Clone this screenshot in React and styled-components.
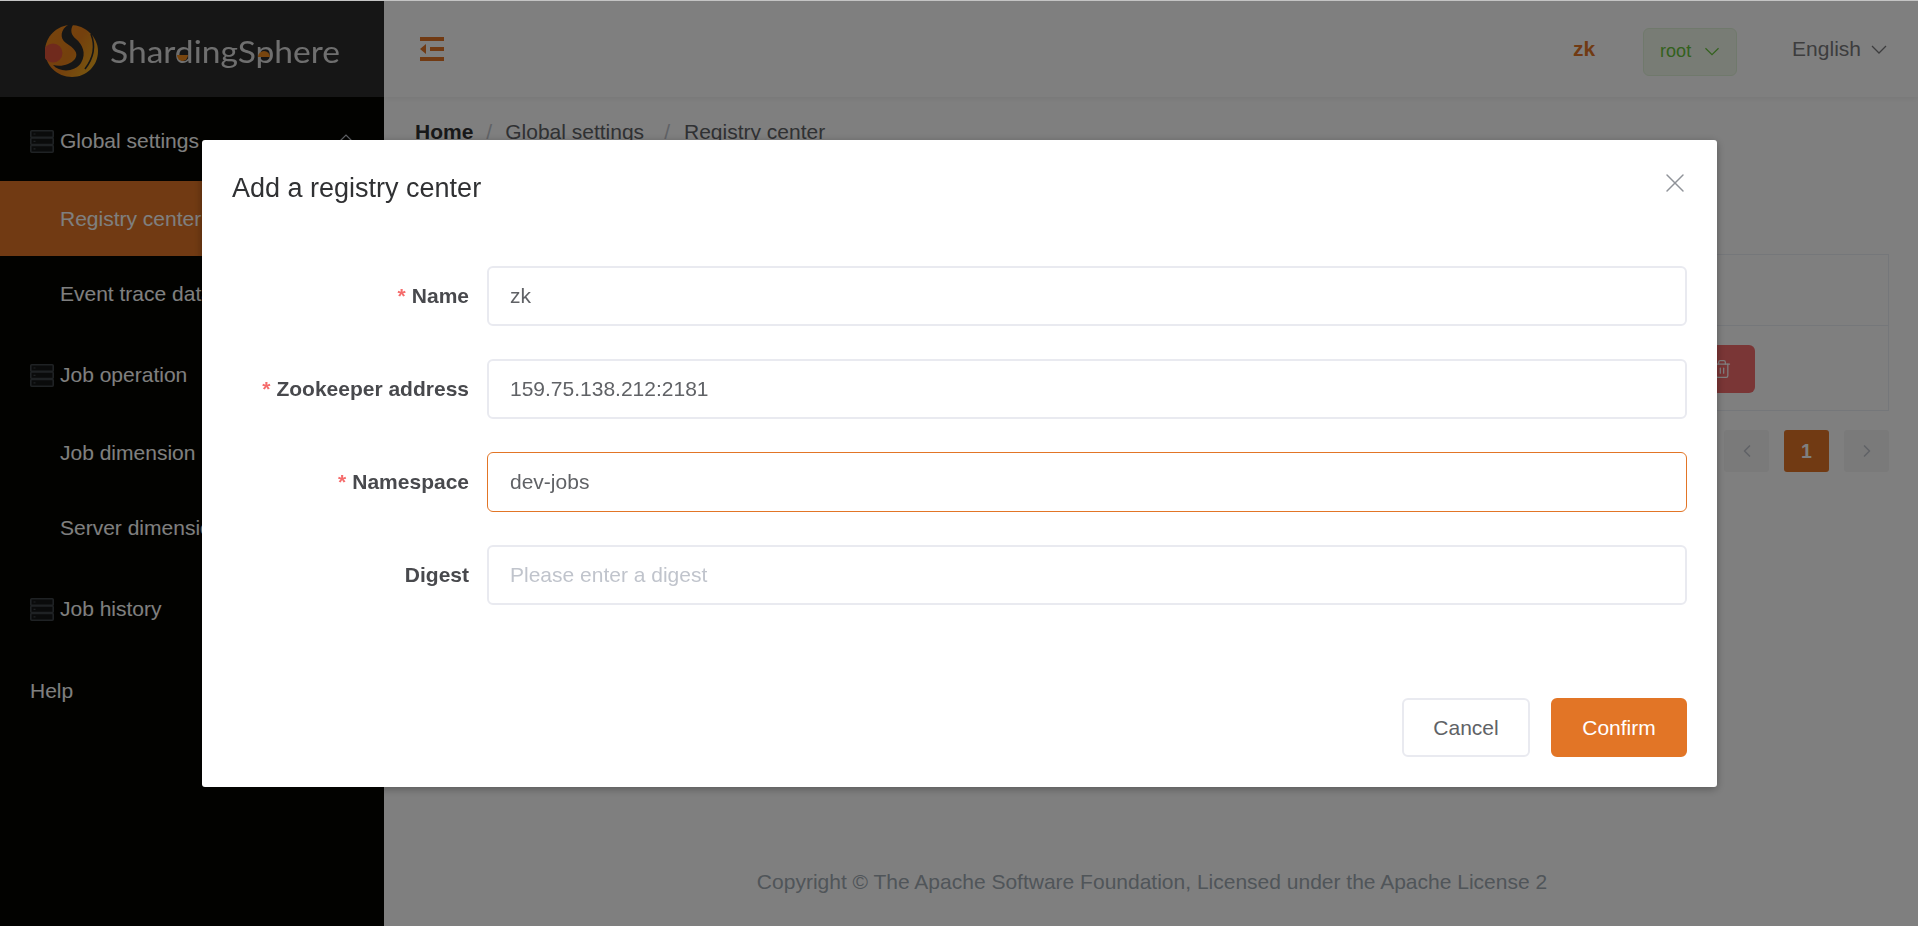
import styled, { createGlobalStyle } from 'styled-components';
import { ChevronLeft, ChevronRight, Trash2, X } from 'lucide-react';

const GlobalStyle = createGlobalStyle`
  html, body {
    margin: 0;
    padding: 0;
    height: 100%;
    overflow: hidden;
    background: #fff;
    font-family: "Liberation Sans", Arial, sans-serif;
    font-size: 21px;
    color: #606266;
  }
  * {
    box-sizing: border-box;
  }
`;

const Page = styled.div`
  display: flex;
  width: 1918px;
  height: 926px;
  overflow: hidden;
`;

const Sidebar = styled.aside`
  flex: 0 0 384px;
  background: #050500;
  color: #fff;
`;

const LogoBar = styled.div`
  display: flex;
  align-items: flex-start;
  height: 97px;
  padding: 22px 0 0 45px;
  background: #2d2d2d;
`;

const LogoMark = styled.svg`
  display: block;
  filter: blur(0.4px);
`;

const MenuTitle = styled.div`
  display: flex;
  align-items: center;
  gap: 6px;
  height: 84px;
  padding: ${(p) => (p.$withIcon ? '4px' : '0')} 30px 0;
  white-space: nowrap;
`;

const MenuItem = styled.div`
  display: flex;
  align-items: center;
  height: 75px;
  padding-left: 60px;
  white-space: nowrap;
  background: ${(p) => (p.$active ? '#e27526' : 'transparent')};
`;

const Caret = styled.svg`
  margin-left: auto;
  margin-right: -1px;
  margin-top: -4px;
  color: #c0c4cc;
`;

const Main = styled.main`
  flex: 1;
  display: flex;
  flex-direction: column;
  min-width: 0;
`;

const Header = styled.header`
  display: flex;
  align-items: center;
  height: 97px;
  padding: 1px 31px 0 36px;
  box-shadow: 0 1px 6px rgba(0, 0, 0, 0.08);
`;

const Toggle = styled.svg`
  display: block;
  margin-right: auto;
  color: #e27526;
`;

const SourceName = styled.b`
  color: #e27526;
  margin-right: 48px;
`;

const RoleTag = styled.div`
  display: flex;
  align-items: center;
  gap: 14px;
  width: 94px;
  height: 48px;
  margin-top: 6px;
  margin-right: 55px;
  padding: 0 0 2px 16px;
  border: 1px solid #e1f3d8;
  border-radius: 6px;
  background: #f0f9eb;
  color: #67c23a;
  font-size: 18px;
`;

const LanguagePicker = styled.div`
  display: flex;
  align-items: center;
  gap: 10px;
  color: #7a7a7d;
`;

const Content = styled.div`
  flex: 1;
  display: flex;
  flex-direction: column;
  padding: 23px 29px 32px 31px;
`;

const Breadcrumb = styled.nav`
  display: flex;
  align-items: center;
  height: 24px;
  white-space: nowrap;
`;

const Crumb = styled.span`
  color: ${(p) => (p.$strong ? '#303133' : '#606266')};
  font-weight: ${(p) => (p.$strong ? 700 : 400)};
`;

const Slash = styled.span`
  margin: 0 ${(p) => p.$right}px 0 ${(p) => p.$left}px;
  color: #c0c4cc;
`;

const Table = styled.div`
  margin-top: 110px;
  border: 1px solid #ebeef5;
`;

const TableRow = styled.div`
  display: grid;
  grid-template-columns: 1fr 2fr 1fr 1fr 200px;
  align-items: center;
  height: ${(p) => p.$height}px;
  padding-left: 20px;
  border-top: ${(p) => (p.$divided ? '1px solid #ebeef5' : 'none')};
`;

const DeleteButton = styled.div`
  display: flex;
  align-items: center;
  justify-content: center;
  width: 66px;
  height: 48px;
  margin: 2px 0 0 1px;
  border-radius: 6px;
  background: #f56c6c;
  color: #fff;
`;

const Pagination = styled.div`
  display: flex;
  justify-content: flex-end;
  gap: 15px;
  margin-top: 19px;
`;

const PageButton = styled.div`
  display: flex;
  align-items: center;
  justify-content: center;
  width: 45px;
  height: 42px;
  border-radius: 3px;
  background: ${(p) => (p.$active ? '#e27526' : '#f4f4f5')};
  color: ${(p) => (p.$active ? '#fff' : '#c0c4cc')};
  font-size: 19.5px;
  font-weight: 700;
`;

const Footer = styled.footer`
  margin-top: auto;
  text-align: center;
  line-height: 24px;
  color: #a0aab2;
  white-space: nowrap;
`;

const Overlay = styled.div`
  position: fixed;
  inset: 0;
  z-index: 10;
  background: rgba(0, 0, 0, 0.5);
  border-top: 1px solid #c4c4c4;
`;

const Dialog = styled.section`
  position: fixed;
  top: 140px;
  left: 202px;
  z-index: 11;
  display: flex;
  flex-direction: column;
  width: 1515px;
  height: 647px;
  padding: 30px;
  border-radius: 3px;
  background: #fff;
  box-shadow: 0 2px 8px rgba(0, 0, 0, 0.3);
`;

const DialogTitle = styled.h2`
  margin: 0 0 60px;
  font-size: 27px;
  font-weight: 400;
  line-height: 36px;
  color: #303133;
`;

const CloseIcon = styled(X)`
  position: absolute;
  top: 27px;
  right: 26px;
  color: #909399;
`;

const Form = styled.form`
  display: flex;
  flex-direction: column;
  gap: 33px;
`;

const Field = styled.div`
  display: grid;
  grid-template-columns: 237px 1fr;
  column-gap: 18px;
  align-items: center;
`;

const Label = styled.label`
  text-align: right;
  font-weight: 700;
  color: #48494d;
`;

const Required = styled.span`
  margin-right: 6px;
  color: #f56c6c;
`;

const TextInput = styled.input`
  width: 100%;
  height: 60px;
  padding: 0 ${(p) => (p.$focused ? 22 : 21)}px;
  border: ${(p) => (p.$focused ? '1px solid #e27526' : '2px solid #e9eaf0')};
  border-radius: 6px;
  outline: none;
  background: #fff;
  font: inherit;
  color: #606266;

  &::placeholder {
    color: #c0c4cc;
    opacity: 1;
  }
`;

const DialogFooter = styled.div`
  display: flex;
  justify-content: flex-end;
  gap: 21px;
  margin-top: auto;
`;

const Button = styled.button`
  height: 59px;
  width: ${(p) => (p.$primary ? '136px' : '128px')};
  padding: 0;
  border: 2px solid ${(p) => (p.$primary ? '#e27526' : '#e9eaf0')};
  border-radius: 6px;
  background: ${(p) => (p.$primary ? '#e27526' : '#fff')};
  color: ${(p) => (p.$primary ? '#fff' : '#606266')};
  font: inherit;
`;

function Logo() {
  return (
    <LogoMark width="300" height="60" viewBox="0 0 300 60" aria-label="ShardingSphere logo">
      <defs>
        <linearGradient id="flame" x1="0" y1="0" x2="1" y2="0.6">
          <stop offset="0" stopColor="#f08a1c" />
          <stop offset="0.6" stopColor="#e8801a" />
          <stop offset="1" stopColor="#f0a81e" />
        </linearGradient>
      </defs>
      <path d="M26 3C40 3 53 15 53 29C53 44 41 55 27 55C12 55 0 43 0 29C0 15 12 3 26 3Z" fill="url(#flame)" />
      <circle cx="8" cy="31" r="9.5" fill="#e0553a" />
      <path
        d="M23 3C16 7 14 16 21 21C29 26 34 31 30 37C25 43 16 45 8 43C15 51 30 50 36 41C42 31 37 22 31 17C26 13 25 8 28 3Z"
        fill="#2d2d2d"
      />
      <path d="M46 12C50 22 50 34 40 47" fill="none" stroke="#2d2d2d" strokeWidth="1.6" />
      <text
        x="65"
        y="41"
        fontFamily="Lato, 'Open Sans', sans-serif"
        fontWeight="400"
        fontSize="30"
        fill="#dedede"
        textLength="230"
        lengthAdjust="spacingAndGlyphs"
      >
        ShardingSphere
      </text>
      <path d="M132 33H143A5.5 6 0 0 1 132 33Z" fill="#f08a1c" />
      <path d="M213 35H225A6 6 0 0 0 213 35Z" fill="#f08a1c" />
    </LogoMark>
  );
}

function ServerIcon() {
  return (
    <svg width="24" height="23" viewBox="0 0 24 23" fill="#141617" stroke="#3f4549" strokeWidth="1.6">
      <rect x="0.8" y="0.8" width="22.4" height="6.6" rx="1" />
      <rect x="0.8" y="8" width="22.4" height="6.6" rx="1" />
      <rect x="0.8" y="15.4" width="22.4" height="6.8" rx="1" />
      <path d="M3.5 4H5.5M3.5 11.3H5.5M3.5 18.8H5.5" strokeWidth="1.2" />
    </svg>
  );
}

function ToggleIcon() {
  return (
    <Toggle width="24" height="24" viewBox="0 0 24 24" fill="currentColor">
      <rect x="0" y="0" width="24" height="4" />
      <rect x="10" y="10" width="14" height="4" />
      <rect x="0" y="20" width="24" height="4" />
      <path d="M0 12L6 7V17Z" />
    </Toggle>
  );
}

// wide shallow arrow used by the dropdowns
function Arrow({ width = 15 }) {
  return (
    <svg width={width} height="9" viewBox="0 0 15 9" fill="none" stroke="currentColor" strokeWidth="1.3">
      <path d="M0.5 1L7.5 8L14.5 1" />
    </svg>
  );
}

const MENU = [
  { title: 'Global settings', icon: true, caret: true, items: [{ label: 'Registry center', active: true }, { label: 'Event trace data source' }] },
  { title: 'Job operation', icon: true, items: [{ label: 'Job dimension' }, { label: 'Server dimension' }] },
  { title: 'Job history', icon: true, items: [] },
  { title: 'Help', items: [] },
];

const FIELDS = [
  { label: 'Name', value: 'zk', required: true },
  { label: 'Zookeeper address', value: '159.75.138.212:2181', required: true },
  { label: 'Namespace', value: 'dev-jobs', required: true, focused: true },
  { label: 'Digest', placeholder: 'Please enter a digest' },
];

export default function App() {
  return (
    <>
      <GlobalStyle />
      <Page>
        <Sidebar>
          <LogoBar>
            <Logo />
          </LogoBar>
          {MENU.map((group) => (
            <div key={group.title}>
              <MenuTitle $withIcon={group.icon}>
                {group.icon && <ServerIcon />}
                {group.title}
                {group.caret && (
                  <Caret width="18" height="10" viewBox="0 0 18 10" fill="none" stroke="currentColor" strokeWidth="1.2">
                    <path d="M1 9L9 1L17 9" />
                  </Caret>
                )}
              </MenuTitle>
              {group.items.map((item) => (
                <MenuItem key={item.label} $active={item.active}>
                  {item.label}
                </MenuItem>
              ))}
            </div>
          ))}
        </Sidebar>

        <Main>
          <Header>
            <ToggleIcon />
            <SourceName>zk</SourceName>
            <RoleTag>
              root
              <Arrow width={14} />
            </RoleTag>
            <LanguagePicker>
              English
              <Arrow width={16} />
            </LanguagePicker>
          </Header>

          <Content>
            <Breadcrumb>
              <Crumb $strong>Home</Crumb>
              <Slash $left={13} $right={13}>/</Slash>
              <Crumb>Global settings</Crumb>
              <Slash $left={20} $right={14}>/</Slash>
              <Crumb>Registry center</Crumb>
            </Breadcrumb>

            <Table>
              <TableRow $height={70}>
                <span>Name</span>
                <span>Address</span>
                <span>Namespace</span>
                <span>Digest</span>
                <span />
              </TableRow>
              <TableRow $height={85} $divided>
                <span>zk</span>
                <span>159.75.138.212:2181</span>
                <span>dev-jobs</span>
                <span />
                <DeleteButton>
                  <Trash2 size={20} strokeWidth={1.5} />
                </DeleteButton>
              </TableRow>
            </Table>

            <Pagination>
              <PageButton>
                <ChevronLeft size={20} strokeWidth={2} />
              </PageButton>
              <PageButton $active>1</PageButton>
              <PageButton>
                <ChevronRight size={20} strokeWidth={2} />
              </PageButton>
            </Pagination>

            <Footer>Copyright © The Apache Software Foundation, Licensed under the Apache License 2</Footer>
          </Content>
        </Main>
      </Page>

      <Overlay />

      <Dialog>
        <DialogTitle>Add a registry center</DialogTitle>
        <CloseIcon size={32} strokeWidth={1.1} />
        <Form>
          {FIELDS.map((field) => (
            <Field key={field.label}>
              <Label>
                {field.required && <Required>*</Required>}
                {field.label}
              </Label>
              <TextInput
                readOnly
                value={field.value || ''}
                placeholder={field.placeholder}
                $focused={field.focused}
              />
            </Field>
          ))}
        </Form>
        <DialogFooter>
          <Button type="button">Cancel</Button>
          <Button type="button" $primary>
            Confirm
          </Button>
        </DialogFooter>
      </Dialog>
    </>
  );
}
